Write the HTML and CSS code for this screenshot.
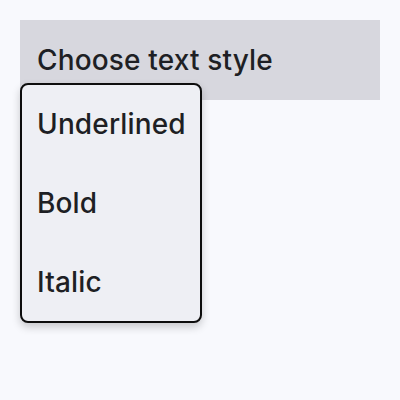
FILE: index.html
```html
<!DOCTYPE html>
<html>
<head>
<meta charset="utf-8">
<link rel="stylesheet" href="styles.css">
</head>
<body>
<div class="wrap">
  <div class="select">Choose text style</div>
  <ul class="menu">
    <li class="item">Underlined</li>
    <li class="item">Bold</li>
    <li class="item">Italic</li>
  </ul>
</div>
</body>
</html>
```
FILE: styles.css
```css
html, body {
  margin: 0;
  padding: 0;
  background: #f8f9fd;
  font-family: Inter, "Noto Sans", sans-serif;
  color: #1e1f24;
}
body {
  min-height: 400px;
}
.wrap {
  padding: 20px;
}
.select {
  height: 80px;
  background: #d7d7de;
  display: flex;
  align-items: center;
  padding: 0 17px;
  font-size: 28px;
  font-weight: 500;
  letter-spacing: 0.15px;
}
.menu {
  width: 178px;
  margin: -17px 0 0 0;
  padding: 0;
  list-style: none;
  background: #eeeff4;
  border: 2px solid #0d0d0d;
  border-radius: 8px;
  box-shadow: 0 4px 8px rgba(0,0,0,0.2);
}
.item {
  height: 78.67px;
  display: flex;
  align-items: center;
  padding: 0 15px;
  font-size: 28px;
  font-weight: 500;
  letter-spacing: 0.15px;
}
```
